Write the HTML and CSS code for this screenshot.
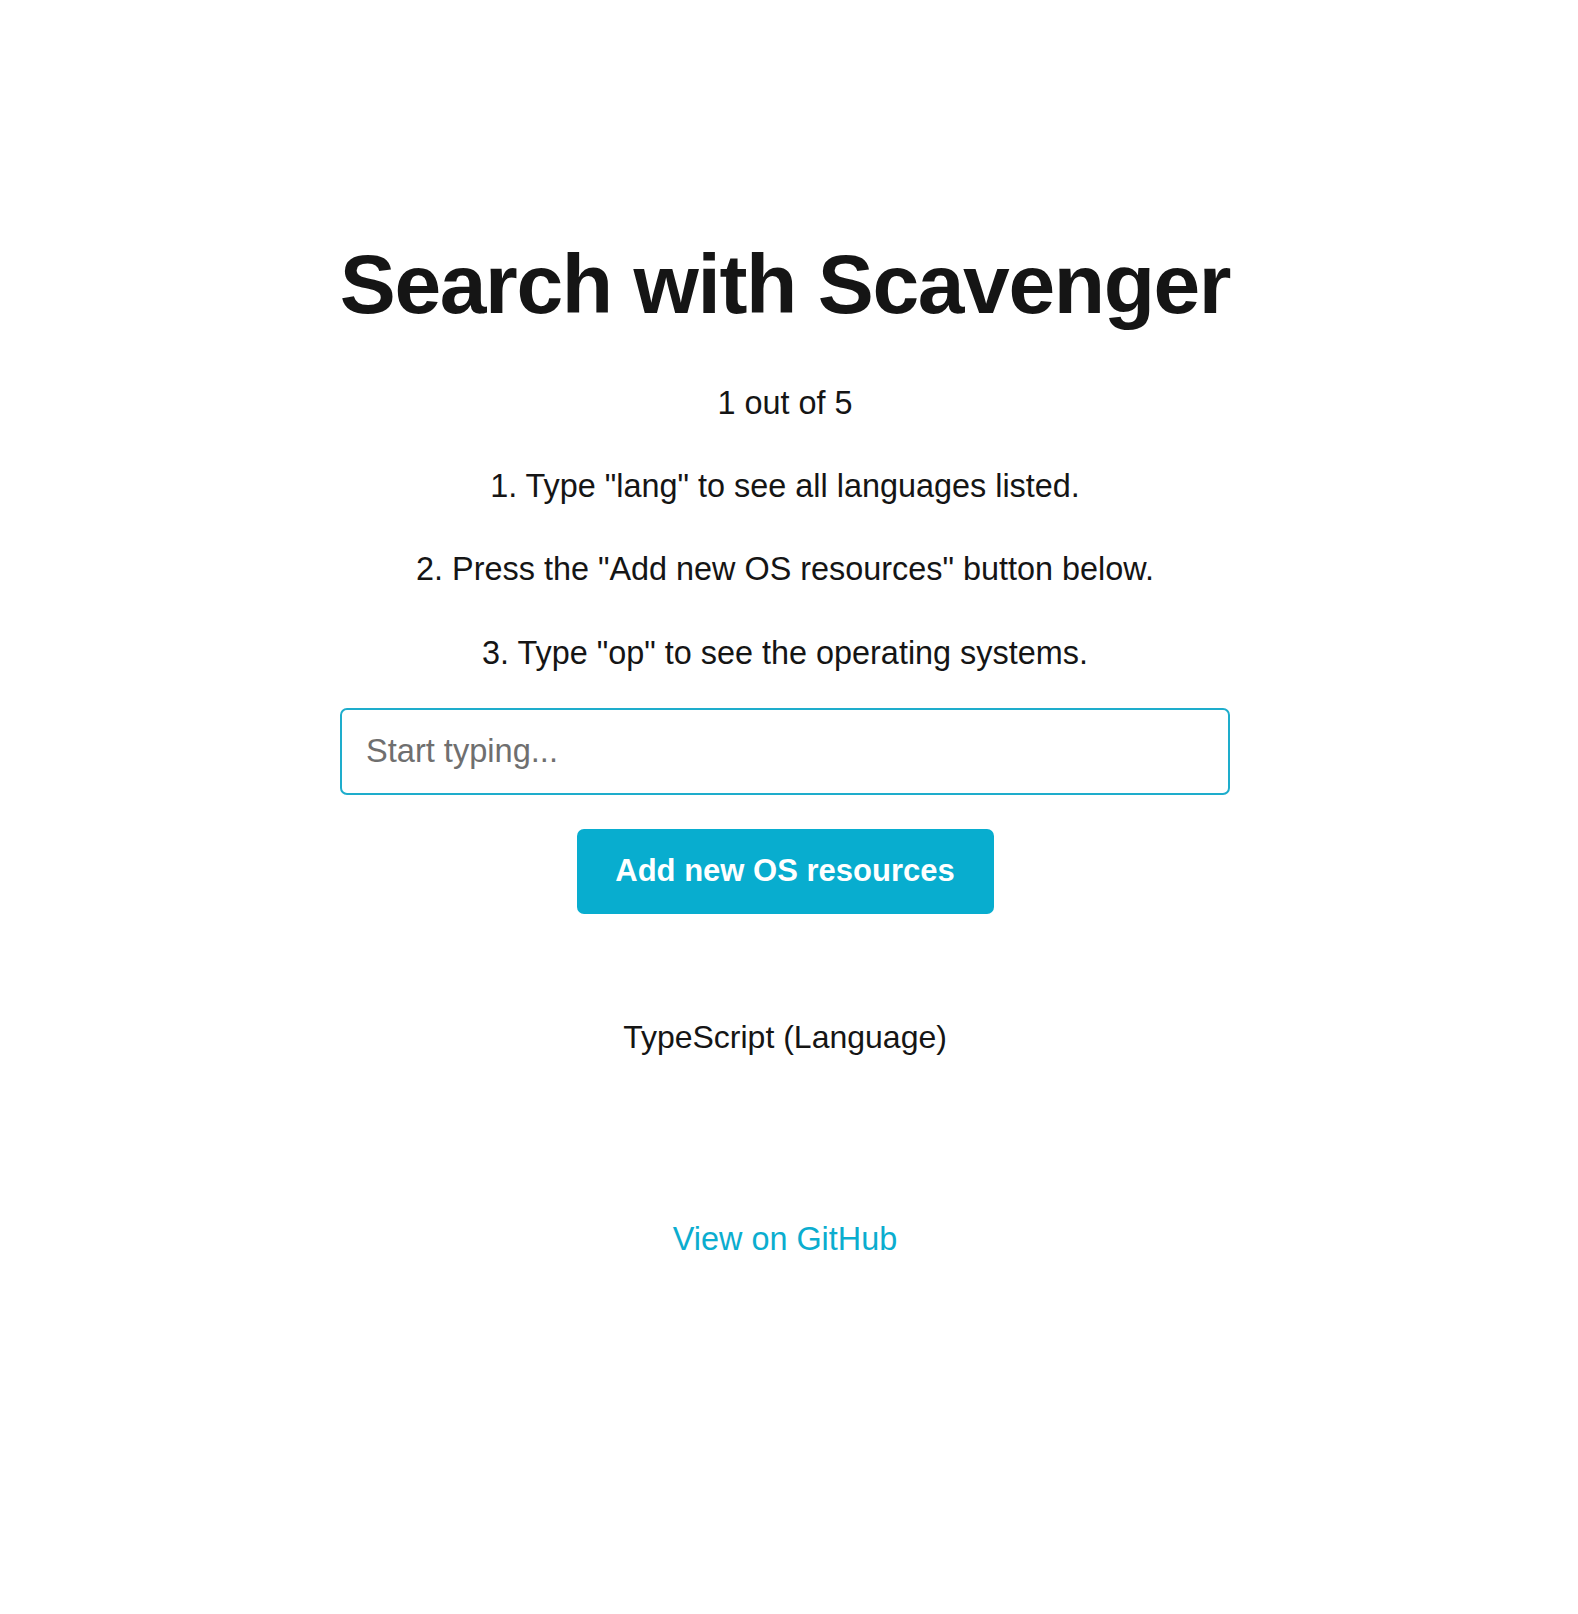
FILE: index.html
```html
<!DOCTYPE html>
<html lang="en">
<head>
<meta charset="utf-8">
<title>Search with Scavenger</title>
<link rel="stylesheet" href="styles.css">
</head>
<body>
<main class="page">
  <h1 class="title">Search with Scavenger</h1>
  <p class="step-count">1 out of 5</p>
  <p class="step">1. Type "lang" to see all languages listed.</p>
  <p class="step">2. Press the "Add new OS resources" button below.</p>
  <p class="step">3. Type "op" to see the operating systems.</p>
  <input class="search" type="text" placeholder="Start typing...">
  <button class="add-btn" type="button">Add new OS resources</button>
  <ul class="results">
    <li class="result">TypeScript (Language)</li>
  </ul>
  <a class="github" href="#">View on GitHub</a>
</main>
</body>
</html>
```

FILE: styles.css
```css
html, body {
  margin: 0;
  padding: 0;
  background: #ffffff;
}

body {
  font-family: "Liberation Sans", Arial, Helvetica, sans-serif;
  color: #151515;
  padding-right: 8px;
}

.page {
  width: 890px;
  margin: 0 auto;
  padding-top: 236px;
  display: flex;
  flex-direction: column;
  align-items: center;
  text-align: center;
}

.title {
  margin: 0;
  font-size: 84px;
  line-height: 96px;
  font-weight: 700;
  letter-spacing: -1.4px;
  color: #151515;
  white-space: nowrap;
}

.step-count,
.step {
  margin: 0;
  font-size: 32.4px;
  line-height: 36px;
}

.step-count {
  margin-top: 53px;
}

.step {
  margin-top: 47.2px;
}

.search {
  box-sizing: border-box;
  margin-top: 37px;
  width: 890px;
  height: 87px;
  padding: 0 24px;
  border: 2px solid #1eadcc;
  border-radius: 7px;
  font-family: "Liberation Sans", Arial, Helvetica, sans-serif;
  font-size: 32.6px;
  color: #151515;
  background: #fff;
  outline: none;
}

.search::placeholder {
  color: #6f6f6f;
}

.add-btn {
  margin-top: 34px;
  box-sizing: border-box;
  width: 417px;
  height: 85px;
  border: none;
  border-radius: 7px;
  background: #08adcf;
  color: #ffffff;
  font-family: "Liberation Sans", Arial, Helvetica, sans-serif;
  font-size: 31px;
  font-weight: 700;
  cursor: pointer;
}

.results {
  list-style: none;
  margin: 105px 0 0;
  padding: 0;
}

.result {
  font-size: 32px;
  line-height: 36px;
}

.github {
  margin-top: 166px;
  font-size: 32.4px;
  line-height: 36px;
  color: #0badcf;
  text-decoration: none;
}
```
